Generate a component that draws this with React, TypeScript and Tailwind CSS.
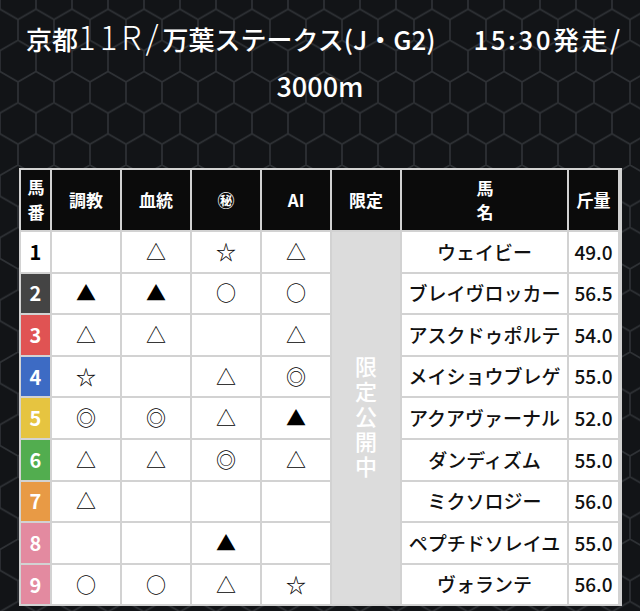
import React from "react";

type Row = {
  no: number;
  bg: string;
  fg: string;
  marks: string[];
  name: string;
  weight: string;
};

const rows: Row[] = [
  { no: 1, bg: "bg-white", fg: "text-black", marks: ["", "△", "☆", "△"], name: "ウェイビー", weight: "49.0" },
  { no: 2, bg: "bg-[#444444]", fg: "text-white", marks: ["▲", "▲", "○", "○"], name: "ブレイヴロッカー", weight: "56.5" },
  { no: 3, bg: "bg-[#e05353]", fg: "text-white", marks: ["△", "△", "", "△"], name: "アスクドゥポルテ", weight: "54.0" },
  { no: 4, bg: "bg-[#3d6bc4]", fg: "text-white", marks: ["☆", "", "△", "◎"], name: "メイショウブレゲ", weight: "55.0" },
  { no: 5, bg: "bg-[#e6c440]", fg: "text-white", marks: ["◎", "◎", "△", "▲"], name: "アクアヴァーナル", weight: "52.0" },
  { no: 6, bg: "bg-[#52ad4f]", fg: "text-white", marks: ["△", "△", "◎", "△"], name: "ダンディズム", weight: "55.0" },
  { no: 7, bg: "bg-[#e89a45]", fg: "text-white", marks: ["△", "", "", ""], name: "ミクソロジー", weight: "56.0" },
  { no: 8, bg: "bg-[#e38aa0]", fg: "text-white", marks: ["", "", "▲", ""], name: "ペプチドソレイユ", weight: "55.0" },
  { no: 9, bg: "bg-[#e38aa0]", fg: "text-white", marks: ["○", "○", "△", "☆"], name: "ヴォランテ", weight: "56.0" },
];

const headers = ["調教", "血統", "㊙", "AI"];

function HexBg() {
  return (
    <svg className="absolute inset-0 h-full w-full" width="640" height="611">
      <defs>
        <pattern
          id="hex"
          width="36"
          height="62.35"
          patternUnits="userSpaceOnUse"
          patternTransform="translate(0 40.3)"
        >
          <path
            d="M18 0 L36 10.39 L36 31.18 L18 41.57 L0 31.18 L0 10.39 Z M18 41.57 L18 62.35"
            fill="none"
            stroke="#2f3236"
            strokeWidth="1.6"
          />
        </pattern>
      </defs>
      <rect width="640" height="611" fill="#121417" />
      <rect width="640" height="611" fill="url(#hex)" />
    </svg>
  );
}

export default function App() {
  return (
    <div
      className="relative w-[640px] h-[611px] overflow-hidden"
      style={{ fontFamily: '"Noto Sans CJK JP", "Noto Sans", sans-serif' }}
    >
      <HexBg />
      <div className="relative flex flex-col">
        <div className="pt-[12px] pl-[26px] text-white text-[26px] leading-[48px] font-medium whitespace-nowrap">
          京都<span className="text-[33px] font-light tracking-[4px]">11R/</span>万葉ステークス(J・G2)
          <span className="ml-[38px] tracking-[2.5px]">15:30発走/</span>
        </div>
        <div className="-mt-[1px] text-center text-white text-[27px] leading-[48px] font-medium">3000m</div>

        <div
          className="mt-[58px] ml-[19px] w-[603px] grid gap-[2px] p-[2px] bg-[#d2d2d2]"
          style={{
            gridTemplateColumns: "29px 68px 68px 68px 68px 68px 165px 49px",
            gridTemplateRows: "60px repeat(9, 39.6px)",
          }}
        >
          {/* header */}
          <div className="bg-[#0b0b0b] flex items-center justify-center pt-[8px]">
            <span className="text-white text-[17px] font-bold leading-[22px] tracking-[8px] [writing-mode:vertical-rl]">
              馬番
            </span>
          </div>
          {headers.map((h) => (
            <div
              key={h}
              className="bg-[#0b0b0b] text-white text-[17px] font-bold flex items-center justify-center"
            >
              {h}
            </div>
          ))}
          <div className="bg-[#0b0b0b] text-white text-[17px] font-bold flex items-center justify-center">
            限定
          </div>
          <div className="bg-[#0b0b0b] flex items-center justify-center pt-[8px]">
            <span className="text-white text-[17px] font-bold leading-[22px] tracking-[7px] [writing-mode:vertical-rl]">
              馬名
            </span>
          </div>
          <div className="bg-[#0b0b0b] text-white text-[17px] font-bold flex items-center justify-center">
            斤量
          </div>

          {rows.map((r, i) => (
            <React.Fragment key={r.no}>
              <div
                className={`${r.bg} ${r.fg} text-[20px] font-bold flex items-center justify-center`}
                style={{ gridColumn: 1, gridRow: i + 2 }}
              >
                {r.no}
              </div>
              {r.marks.map((m, j) => (
                <div
                  key={j}
                  className="bg-white text-black text-[20px] flex items-center justify-center"
                  style={{ gridColumn: j + 2, gridRow: i + 2 }}
                >
                  {m}
                </div>
              ))}
              <div
                className="bg-white text-[#111] text-[19px] font-medium flex items-center justify-center whitespace-nowrap"
                style={{ gridColumn: 7, gridRow: i + 2 }}
              >
                {r.name}
              </div>
              <div
                className="bg-white text-[#111] text-[19px] font-medium flex items-center justify-center"
                style={{ gridColumn: 8, gridRow: i + 2 }}
              >
                {r.weight}
              </div>
            </React.Fragment>
          ))}

          <div
            className="bg-[#dcdcdc] flex items-center justify-center"
            style={{ gridColumn: 6, gridRow: "2 / span 9" }}
          >
            <span className="text-white text-[22px] font-medium leading-[26px] tracking-[3px] [writing-mode:vertical-rl]">
              限定公開中
            </span>
          </div>
        </div>
      </div>
    </div>
  );
}
